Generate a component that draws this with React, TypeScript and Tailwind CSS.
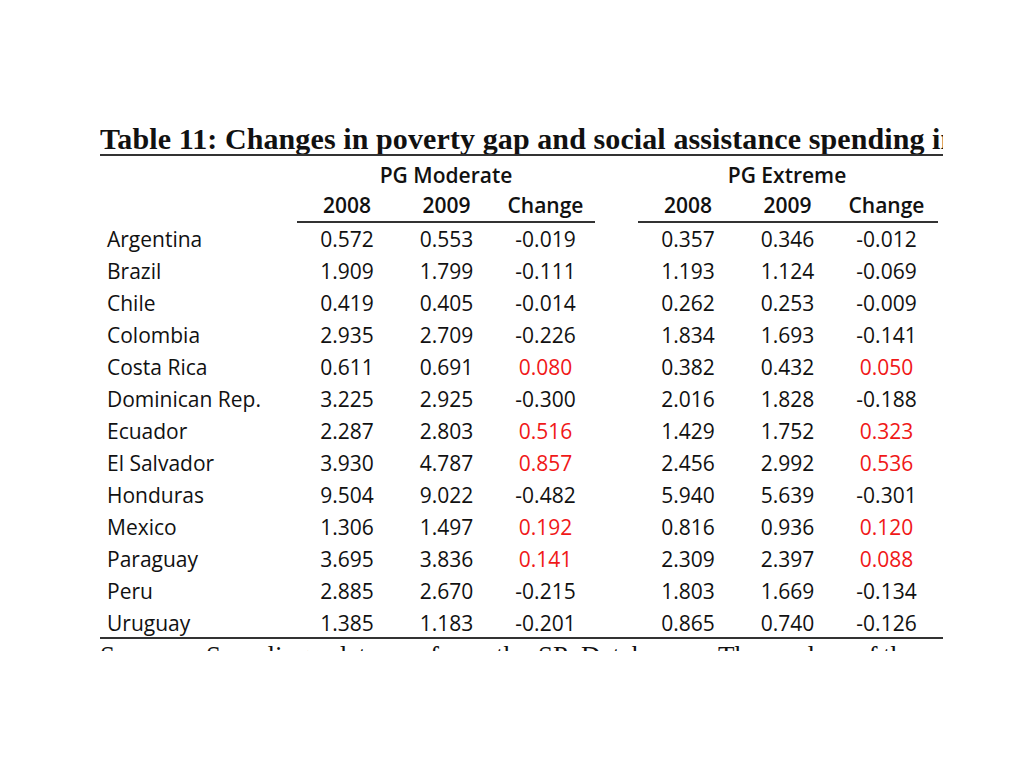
type Row = {
  country: string;
  mod: [string, string, string];
  ext: [string, string, string];
};

const rows: Row[] = [
  { country: "Argentina", mod: ["0.572", "0.553", "-0.019"], ext: ["0.357", "0.346", "-0.012"] },
  { country: "Brazil", mod: ["1.909", "1.799", "-0.111"], ext: ["1.193", "1.124", "-0.069"] },
  { country: "Chile", mod: ["0.419", "0.405", "-0.014"], ext: ["0.262", "0.253", "-0.009"] },
  { country: "Colombia", mod: ["2.935", "2.709", "-0.226"], ext: ["1.834", "1.693", "-0.141"] },
  { country: "Costa Rica", mod: ["0.611", "0.691", "0.080"], ext: ["0.382", "0.432", "0.050"] },
  { country: "Dominican Rep.", mod: ["3.225", "2.925", "-0.300"], ext: ["2.016", "1.828", "-0.188"] },
  { country: "Ecuador", mod: ["2.287", "2.803", "0.516"], ext: ["1.429", "1.752", "0.323"] },
  { country: "El Salvador", mod: ["3.930", "4.787", "0.857"], ext: ["2.456", "2.992", "0.536"] },
  { country: "Honduras", mod: ["9.504", "9.022", "-0.482"], ext: ["5.940", "5.639", "-0.301"] },
  { country: "Mexico", mod: ["1.306", "1.497", "0.192"], ext: ["0.816", "0.936", "0.120"] },
  { country: "Paraguay", mod: ["3.695", "3.836", "0.141"], ext: ["2.309", "2.397", "0.088"] },
  { country: "Peru", mod: ["2.885", "2.670", "-0.215"], ext: ["1.803", "1.669", "-0.134"] },
  { country: "Uruguay", mod: ["1.385", "1.183", "-0.201"], ext: ["0.865", "0.740", "-0.126"] },
];

// words of the following paragraph, with the width each takes in the justified line
const sourceWords: [string, string][] = [
  ["Source:", "w-[106px]"],
  ["Sampling", "w-[127px]"],
  ["data", "w-[97px]"],
  ["from", "w-[66px]"],
  ["the", "w-[42px]"],
  ["SP", "w-[43px]"],
  ["Database.", "w-[137px]"],
  ["The", "w-[64px]"],
  ["values", "w-[73px]"],
  ["of", "w-[28px]"],
  ["the", "w-[40px]"],
];

// positive changes are printed in red in the source table
function changeColor(v: string) {
  return v.startsWith("-") ? "text-[#111]" : "text-[#f01818]";
}

function Cells({ vals, gapLeft }: { vals: [string, string, string]; gapLeft?: boolean }) {
  return (
    <div className={`flex ${gapLeft ? "ml-[43px]" : ""}`}>
      <div className="w-[100px] text-center">{vals[0]}</div>
      <div className="w-[99px] text-center">{vals[1]}</div>
      <div className={`w-[99px] text-center ${changeColor(vals[2])}`}>{vals[2]}</div>
    </div>
  );
}

function YearHeads({ gapLeft }: { gapLeft?: boolean }) {
  return (
    <div className={`flex ${gapLeft ? "ml-[43px]" : ""}`}>
      <div className="w-[100px] text-center">2008</div>
      <div className="w-[99px] text-center">2009</div>
      <div className="w-[99px] text-center">Change</div>
    </div>
  );
}

export default function App() {
  return (
    <div className="w-[1024px] h-[768px] bg-white overflow-hidden">
      <div className="ml-[100px] pt-[124px] w-[843px] overflow-hidden text-[#111]">
        {/* caption, cut off at the right edge like the scanned page */}
        <div className="h-[30px] border-b-2 border-[#333] box-content overflow-hidden">
          <div className="whitespace-nowrap font-['Liberation_Serif',serif] font-bold text-[30px] leading-[30px] tracking-[0.1px]">
            Table 11: Changes in poverty gap and social assistance spending in Latin America
          </div>
        </div>

        <div className="font-['Open_Sans',sans-serif] text-[21px]">
          <div className="mt-[3px] flex h-[32px] leading-[32px] font-semibold">
            <div className="w-[197px]" />
            <div className="w-[298px] text-center">PG Moderate</div>
            <div className="w-[298px] ml-[43px] text-center">PG Extreme</div>
          </div>
          <div className="-mt-[2px] flex h-[32px] leading-[32px] font-semibold">
            <div className="w-[197px]" />
            <YearHeads />
            <YearHeads gapLeft />
          </div>
          <div className="flex h-[2px]">
            <div className="w-[197px]" />
            <div className="w-[298px] bg-[#333]" />
            <div className="w-[300px] ml-[43px] bg-[#333]" />
          </div>

          {rows.map((r) => (
            <div key={r.country} className="flex h-[32px] leading-[32px]">
              <div className="w-[197px] pl-[7px]">{r.country}</div>
              <Cells vals={r.mod} />
              <Cells vals={r.ext} gapLeft />
            </div>
          ))}
          <div className="-mt-[2px] h-[2px] bg-[#333]" />
        </div>

        {/* next paragraph, only the top of the letters shows */}
        <div className="h-[12px] overflow-hidden">
          <div className="mt-[2px] flex whitespace-nowrap font-['Liberation_Serif',serif] text-[27px] leading-[30px]">
            {sourceWords.map(([w, cls], i) => (
              <span key={i} className={`shrink-0 ${cls}`}>
                {w}
              </span>
            ))}
          </div>
        </div>
      </div>
    </div>
  );
}
